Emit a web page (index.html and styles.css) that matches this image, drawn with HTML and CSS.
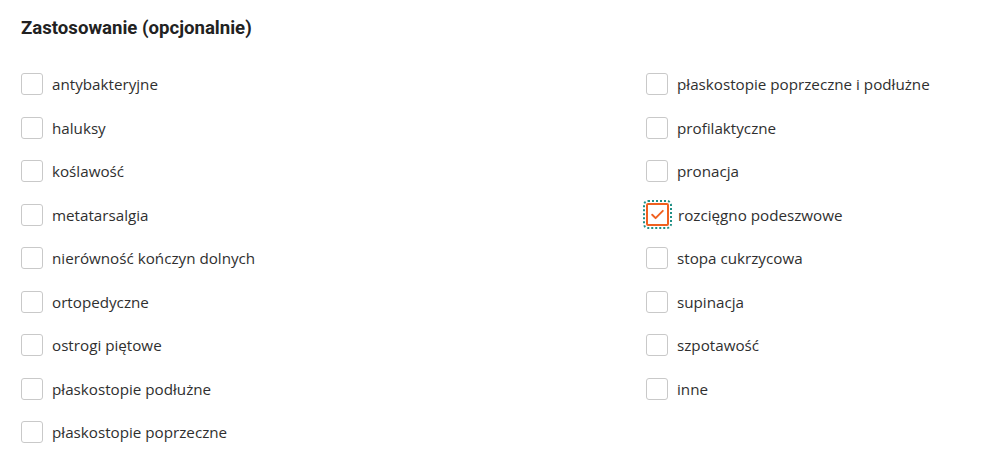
FILE: index.html
```html
<!DOCTYPE html>
<html lang="pl">
<head>
    <meta charset="UTF-8">
    <meta name="viewport" content="width=device-width, initial-scale=1.0">
    <title>Zastosowanie</title>
    <link rel="stylesheet" href="styles.css">
</head>
<body>
    <!-- Filter group -->
    <section class="filter">
        <h2 class="filter-title">Zastosowanie (opcjonalnie)</h2>

        <div class="filter-columns">
            <ul class="option-list">
                <li class="option"><span class="box"></span><span class="label">antybakteryjne</span></li>
                <li class="option"><span class="box"></span><span class="label">haluksy</span></li>
                <li class="option"><span class="box"></span><span class="label">koślawość</span></li>
                <li class="option"><span class="box"></span><span class="label">metatarsalgia</span></li>
                <li class="option"><span class="box"></span><span class="label">nierówność kończyn dolnych</span></li>
                <li class="option"><span class="box"></span><span class="label">ortopedyczne</span></li>
                <li class="option"><span class="box"></span><span class="label">ostrogi piętowe</span></li>
                <li class="option"><span class="box"></span><span class="label">płaskostopie podłużne</span></li>
                <li class="option"><span class="box"></span><span class="label">płaskostopie poprzeczne</span></li>
            </ul>
            <ul class="option-list">
                <li class="option"><span class="box"></span><span class="label">płaskostopie poprzeczne i podłużne</span></li>
                <li class="option"><span class="box"></span><span class="label">profilaktyczne</span></li>
                <li class="option"><span class="box"></span><span class="label">pronacja</span></li>
                <li class="option is-checked">
                    <span class="box">
                        <svg viewBox="0 0 16 16" width="17" height="17">
                            <path d="M3 8.2l3.2 3.2L13 4.6" fill="none" stroke="#f0601f" stroke-width="1.8" stroke-linecap="round" stroke-linejoin="round"/>
                        </svg>
                    </span>
                    <span class="label">rozcięgno podeszwowe</span>
                </li>
                <li class="option"><span class="box"></span><span class="label">stopa cukrzycowa</span></li>
                <li class="option"><span class="box"></span><span class="label">supinacja</span></li>
                <li class="option"><span class="box"></span><span class="label">szpotawość</span></li>
                <li class="option"><span class="box"></span><span class="label">inne</span></li>
            </ul>
        </div>
    </section>
</body>
</html>
```

FILE: styles.css
```css
/* General */
body {
    margin: 0;
    background: #ffffff;
    color: #2b2b2b;
    font-family: 'Open Sans', sans-serif;
}

/* Filter group */
.filter {
    padding: 18px 0 0 21px;
}

.filter-title {
    margin: 0;
    font-family: Roboto, sans-serif;
    font-size: 18.6px;
    font-weight: 700;
    color: #222222;
    line-height: 20px;
}

.filter-columns {
    display: grid;
    grid-template-columns: 625px 1fr;
    margin-top: 35px;
}

/* Options */
.option-list {
    list-style: none;
    margin: 0;
    padding: 0;
    display: flex;
    flex-direction: column;
    gap: 21.5px;
}

.option {
    display: flex;
    align-items: center;
    gap: 9px;
    height: 22px;
}

.box {
    box-sizing: border-box;
    width: 22px;
    height: 22px;
    flex-shrink: 0;
    border: 1px solid #c9c9c9;
    border-radius: 3px;
    background: #ffffff;
    display: flex;
    align-items: center;
    justify-content: center;
}

.is-checked .box {
    width: 23px;
    height: 23px;
    border: 2px solid #f0601f;
    border-radius: 2px;
    outline: 2px dotted #1f8f86;
    outline-offset: 1px;
}

.label {
    font-size: 15.2px;
    color: #2f2f2f;
    white-space: nowrap;
}
```
